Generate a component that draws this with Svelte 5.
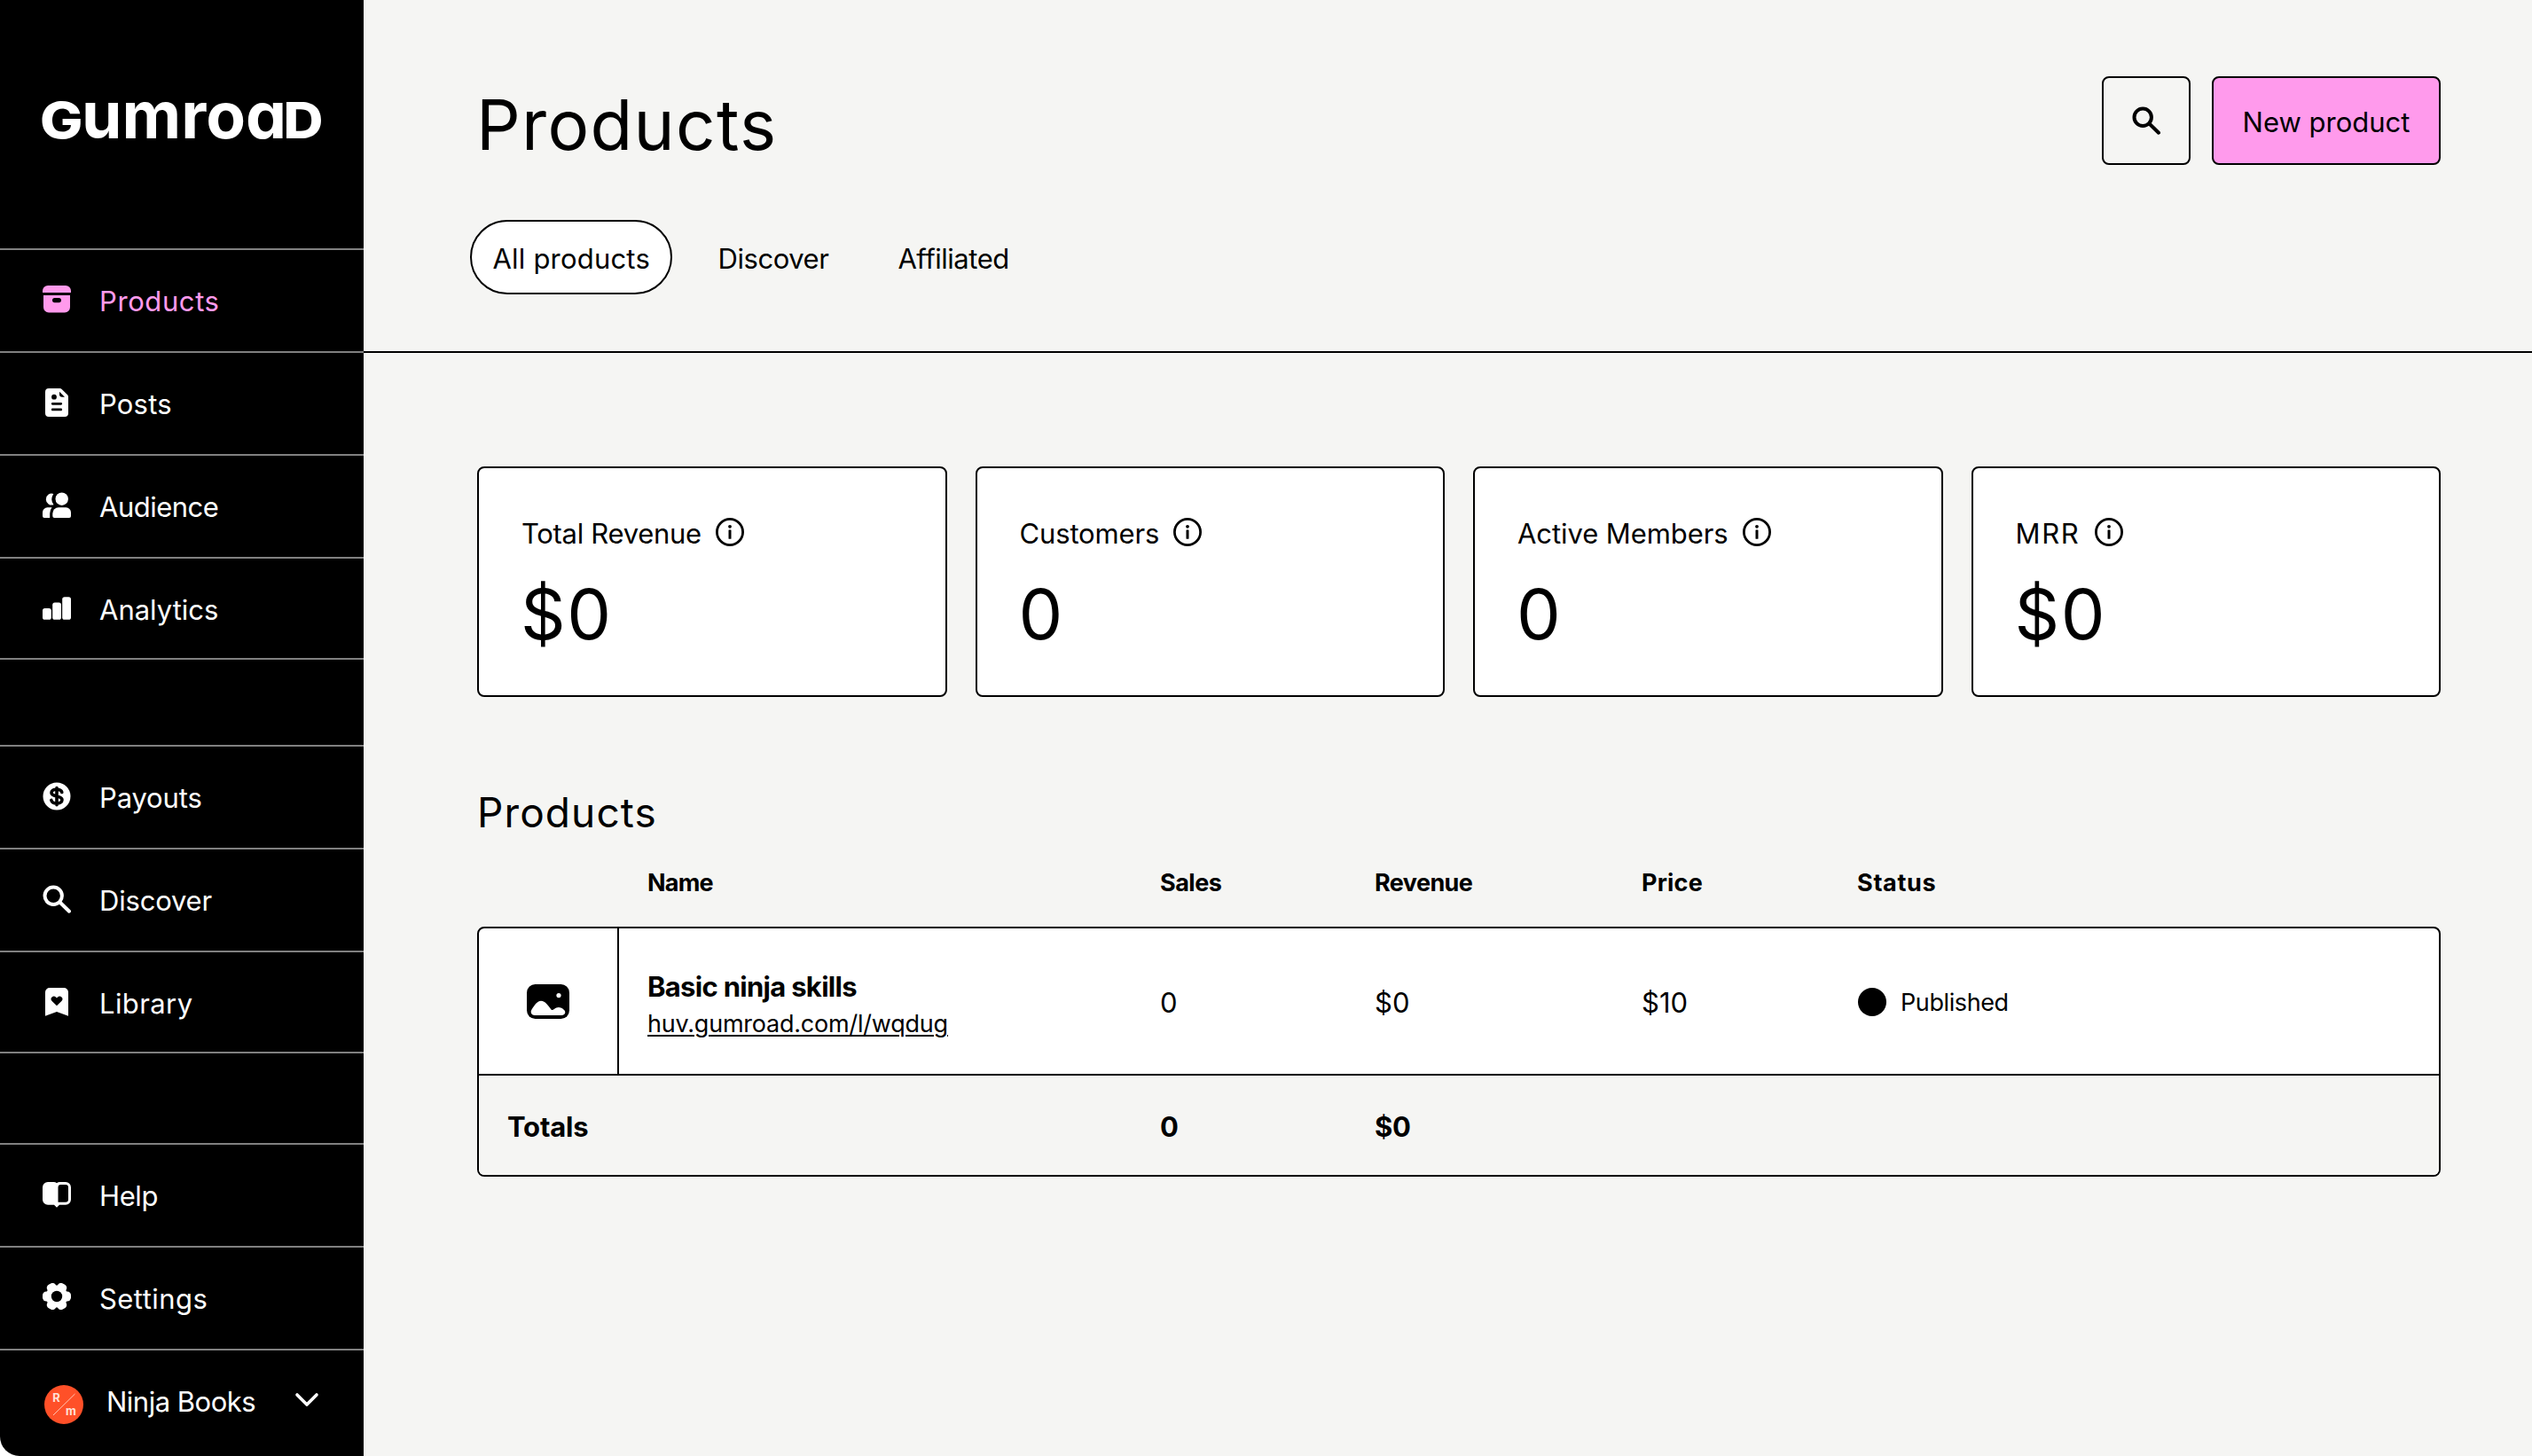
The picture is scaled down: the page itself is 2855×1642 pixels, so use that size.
<script>
  // tracking is the letter-spacing of a label, in px
  const mainLinks = [
    { label: "Products", icon: "archive", tracking: 0.6, active: true },
    { label: "Posts", icon: "file", tracking: 0.2 },
    { label: "Audience", icon: "people", tracking: -0.5 },
    { label: "Analytics", icon: "bars", tracking: 0 },
  ];

  const moreLinks = [
    { label: "Payouts", icon: "dollar", tracking: -0.15 },
    { label: "Discover", icon: "search", tracking: -0.2 },
    { label: "Library", icon: "bookmark", tracking: 0.4 },
  ];

  const footerLinks = [
    { label: "Help", icon: "book", tracking: -0.4 },
    { label: "Settings", icon: "gear", tracking: 0.45 },
  ];

  const tabs = ["All products", "Discover", "Affiliated"];
  let selected = $state("All products");

  const stats = [
    { label: "Total Revenue", value: "$0", tracking: -0.3 },
    { label: "Customers", value: "0", tracking: -0.15 },
    { label: "Active Members", value: "0", tracking: -0.08 },
    { label: "MRR", value: "$0", tracking: 1.7 },
  ];

  const columns = [
    { label: "Name", tracking: -0.8 },
    { label: "Sales", tracking: -0.5 },
    { label: "Revenue", tracking: -0.6 },
    { label: "Price", tracking: 0.2 },
    { label: "Status", tracking: 0.7 },
  ];

  const products = [
    {
      name: "Basic ninja skills",
      url: "huv.gumroad.com/l/wqdug",
      sales: "0",
      revenue: "$0",
      price: "$10",
      status: "Published",
    },
  ];
</script>

{#snippet icon(name)}
  <svg class="icon" viewBox="0 0 32 32" width="32" height="32" fill="currentColor" aria-hidden="true">
    {#if name === "archive"}
      <path d="M6 0h20a6 6 0 0 1 6 6v2H0V6a6 6 0 0 1 6-6z" />
      <path
        fill-rule="evenodd"
        d="M1 11h30v13.5a6 6 0 0 1-6 6H7a6 6 0 0 1-6-6zM13.6 14a2.6 2.6 0 0 0 0 5.2h4.8a2.6 2.6 0 0 0 0-5.2z"
      />
    {:else if name === "file"}
      <path
        fill-rule="evenodd"
        d="M7 0h12.500q1.300 0 2.200 .9l6.400 6.400q.9 .9 .9 2.200V28a4 4 0 0 1-4 4H7a4 4 0 0 1-4-4V4a4 4 0 0 1 4-4zM19 3.700v3a3 3 0 0 0 3 3h3zM13 6.800a2.900 2.900 0 1 0 0 5.800a2.900 2.900 0 1 0 0-5.800zM11.200 16a1.300 1.300 0 0 0 0 2.700h9.600a1.300 1.300 0 0 0 0-2.700zM11.200 22.600a1.300 1.300 0 0 0 0 2.700h9.600a1.300 1.300 0 0 0 0-2.700z"
      />
    {:else if name === "people"}
      <circle cx="21.700" cy="8.700" r="7.200" />
      <path d="M12.300 2.900a10.600 10.600 0 0 0 .2 12.300A6.500 6.500 0 1 1 12.300 2.900z" />
      <path d="M18 18.300h8.500a5.500 5.500 0 0 1 5.500 5.500V28q0 2-2 2H13.300q-2 0-2-2v-3a6.700 6.700 0 0 1 6.700-6.700z" />
      <path d="M5.500 18.300h5q-2.300 3-2.300 6.700v5H2q-2 0-2-2v-4.200a5.500 5.500 0 0 1 5.500-5.500z" />
    {:else if name === "bars"}
      <rect x="0" y="16" width="9.800" height="12.800" rx="2.600" />
      <rect x="11.200" y="9.600" width="9.800" height="19.200" rx="2.600" />
      <rect x="22.200" y="3.200" width="9.800" height="25.600" rx="2.600" />
    {:else if name === "dollar"}
      <circle cx="16" cy="16" r="15.500" />
      <path
        class="cut"
        d="M21.800 11.500c-.6-2.300-2.700-3.300-5.800-3.300s-6 1.200-6 3.900c0 5.400 12 2.200 12 7.900 0 2.700-2.800 4-6 4s-5.600-1.200-6.200-3.600M16 6.500v19.300"
      />
    {:else if name === "search"}
      <path class="line" d="M20 20l10 9.700" />
      <circle class="line" cx="12.200" cy="12.200" r="9.700" />
    {:else if name === "bookmark"}
      <path
        fill-rule="evenodd"
        d="M8 0h16a5 5 0 0 1 5 5v26.800L16 27 3 31.800V5a5 5 0 0 1 5-5zM16 20.200l5.400-5.200a3.100 3.100 0 0 0-4.400-4.500l-1 1-1-1a3.100 3.100 0 0 0-4.400 4.500z"
      />
    {:else if name === "book"}
      <path
        fill-rule="evenodd"
        d="M6 2h6.500q2 0 3.500 1.200Q17.500 2 19.500 2H26a6 6 0 0 1 6 6v13.700a6 6 0 0 1-6 6h-7L16 30.700 13 27.700H6a6 6 0 0 1-6-6V8a6 6 0 0 1 6-6zM20.500 5a3 3 0 0 0-3 3v16.700H26a3 3 0 0 0 3-3V8a3 3 0 0 0-3-3z"
      />
    {:else if name === "gear"}
      <mask id="gear-hole">
        <rect width="32" height="32" fill="#fff" />
        <circle cx="16" cy="15" r="6.200" fill="#000" />
      </mask>
      <g mask="url(#gear-hole)">
        <circle cx="16" cy="15" r="12.400" />
        <rect x="0" y="9.500" width="32" height="11" rx="4.200" />
        <rect x="0" y="9.500" width="32" height="11" rx="4.200" transform="rotate(60 16 15)" />
        <rect x="0" y="9.500" width="32" height="11" rx="4.200" transform="rotate(120 16 15)" />
      </g>
    {:else if name === "info"}
      <circle cx="16" cy="16" r="14.600" fill="none" stroke="currentColor" stroke-width="2.800" />
      <circle cx="16" cy="9.800" r="1.900" />
      <rect x="14.500" y="13.400" width="3" height="10.400" rx=".6" />
    {/if}
  </svg>
{/snippet}

{#snippet navLink(link)}
  <a href="#top" class="nav-link" class:active={link.active}>
    {@render icon(link.icon)}
    <span style:letter-spacing="{link.tracking}px">{link.label}</span>
  </a>
{/snippet}

<div class="app">
  <nav class="sidebar">
    <svg class="logo" viewBox="0 0 314 60" width="314" height="60" fill="#fff">
      <text class="small-cap" x="-3" y="51" textLength="48.500" lengthAdjust="spacingAndGlyphs">G</text>
      <text x="44" y="51" textLength="231" lengthAdjust="spacingAndGlyphs">umroa</text>
      <text class="small-cap" x="271.500" y="51" textLength="45" lengthAdjust="spacingAndGlyphs">D</text>
    </svg>

    <div class="nav-group">
      {#each mainLinks as link}
        {@render navLink(link)}
      {/each}
    </div>

    <div class="nav-group">
      {#each moreLinks as link}
        {@render navLink(link)}
      {/each}
    </div>

    <div class="nav-bottom">
      {#each footerLinks as link}
        {@render navLink(link)}
      {/each}
      <a href="#top" class="nav-link account">
        <svg class="avatar" viewBox="0 0 44 44" width="44" height="44">
          <circle cx="22" cy="22" r="22" fill="#ff5028" />
          <path d="M10 34L34.500 10" stroke="#ffc5b5" stroke-width="1" />
          <text x="9.300" y="19">R</text>
          <text x="24" y="34">m</text>
        </svg>
        <span>Ninja Books</span>
        <svg class="chevron" viewBox="0 0 28 18" width="28" height="18">
          <path d="M3 3l11 11L25 3" />
        </svg>
      </a>
    </div>
  </nav>

  <main>
    <header>
      <div class="title-row">
        <h1>Products</h1>
        <div class="actions">
          <button class="btn square" aria-label="Search">{@render icon("search")}</button>
          <button class="btn primary">New product</button>
        </div>
      </div>
      <div class="tabs">
        {#each tabs as tab}
          <button class="tab" class:selected={tab === selected} onclick={() => (selected = tab)}>{tab}</button>
        {/each}
      </div>
    </header>

    <section class="stats">
      {#each stats as stat}
        <div class="card">
          <div class="card-label">
            <span style:letter-spacing="{stat.tracking}px">{stat.label}</span>
            {@render icon("info")}
          </div>
          <div class="card-value">{stat.value}</div>
        </div>
      {/each}
    </section>

    <section class="products">
      <h2>Products</h2>
      <div class="row head">
        <div></div>
        {#each columns as column}
          <div style:letter-spacing="{column.tracking}px">{column.label}</div>
        {/each}
      </div>
      <div class="table">
        {#each products as product}
          <div class="row item">
            <div class="thumb">
              <svg viewBox="0 0 48 39" width="48" height="39">
                <rect width="48" height="39" rx="9.500" />
                <circle cx="36" cy="12.600" r="2.600" fill="#fff" />
                <path
                  fill="#fff"
                  d="M5.500 28.500C9 23 12 18.700 16 18.700c5 0 8.500 6 11.300 9.500 1 1.200 2 1 3.200 0 2-1.500 3.500-2.200 5.500-2.200 3 0 7.300 3 7.300 5.500 0 2-1.800 3.500-4.300 3.500H9c-3.500 0-5.500-3.500-3.500-6.500z"
                />
              </svg>
            </div>
            <div class="name">
              <strong>{product.name}</strong>
              <a href="#top">{product.url}</a>
            </div>
            <div>{product.sales}</div>
            <div>{product.revenue}</div>
            <div>{product.price}</div>
            <div class="status"><i class="dot"></i>{product.status}</div>
          </div>
        {/each}
        <div class="row totals">
          <div class="totals-label">Totals</div>
          <div>0</div>
          <div>$0</div>
        </div>
      </div>
    </section>
  </main>
</div>

<style>
  :global(body) {
    margin: 0;
    background: #fff;
  }

  .app,
  .app * {
    box-sizing: border-box;
  }

  .app {
    display: flex;
    height: 1642px;
    overflow: hidden;
    border-bottom-left-radius: 22px;
    background: #f5f5f3;
    color: #000;
    font-family: Inter, "Liberation Sans", sans-serif;
    font-size: 31px;
    line-height: 36px;
  }

  .icon {
    display: block;
    flex: none;
  }

  .line {
    fill: none;
    stroke: currentColor;
    stroke-width: 4;
    stroke-linecap: round;
  }

  .cut {
    fill: none;
    stroke: #000;
    stroke-width: 3.6;
    stroke-linecap: round;
  }

  /* sidebar */
  .sidebar {
    display: flex;
    flex-direction: column;
    flex: none;
    width: 410px;
    background: #000;
    color: #fff;
  }

  .logo {
    flex: none;
    margin: 105px 48px 115px;
    overflow: visible;
    font-size: 73px;
    font-weight: 700;
    font-feature-settings: "cv11";
  }

  .small-cap {
    font-size: 56px;
    font-weight: 800;
  }

  .nav-group {
    margin-bottom: 96px;
  }

  .nav-link {
    display: flex;
    gap: 32px;
    height: 116px;
    padding: 40px 48px 0;
    border-top: 2px solid #808080;
    color: inherit;
    text-decoration: none;
  }

  .nav-group .nav-link:last-child {
    border-bottom: 2px solid #808080;
  }

  .nav-link.active {
    color: #ff9aec;
  }

  .nav-bottom {
    margin-top: auto;
  }

  .nav-link.account {
    gap: 0;
    height: 121px;
    padding-left: 50px;
    letter-spacing: -0.5px;
  }

  .avatar {
    margin-right: 26px;
    margin-top: -1px;
  }

  .avatar text {
    fill: #ffe0d8;
    font-size: 13px;
    font-weight: 700;
  }

  .chevron {
    margin-left: auto;
    margin-right: 2px;
    margin-top: 7px;
  }

  .chevron path {
    fill: none;
    stroke: #fff;
    stroke-width: 3.6;
    stroke-linecap: round;
    stroke-linejoin: round;
  }

  /* page header */
  main {
    flex: 1;
    min-width: 0;
  }

  header {
    height: 398px;
    padding: 86px 103px 0 120px;
    border-bottom: 2px solid #000;
  }

  .title-row {
    display: flex;
    justify-content: space-between;
    height: 100px;
    padding-left: 8px;
  }

  h1 {
    margin: 5px 0 0 -1px;
    font-size: 78px;
    font-weight: 400;
    line-height: 100px;
    letter-spacing: 1.3px;
  }

  .actions {
    display: flex;
    gap: 24px;
  }

  .btn {
    display: flex;
    align-items: center;
    justify-content: center;
    height: 100px;
    padding: 4px 0 0;
    border: 2px solid #000;
    border-radius: 8px;
    background: transparent;
    color: #000;
    font: inherit;
  }

  .square {
    width: 100px;
    padding: 0 0 1px;
  }

  .primary {
    width: 258px;
    background: #ff9aec;
  }

  .tabs {
    display: flex;
    gap: 24px;
    margin-top: 62px;
  }

  .tab {
    height: 84px;
    padding: 4px 25px 0;
    border: 2px solid transparent;
    border-radius: 42px;
    background: none;
    color: #000;
    font: inherit;
    letter-spacing: -0.45px;
  }

  .tab.selected {
    padding: 4px 23.5px 0;
    border-color: #000;
    background: #fff;
    letter-spacing: 0.2px;
  }

  /* stats */
  .stats {
    display: grid;
    grid-template-columns: repeat(4, 1fr);
    gap: 32px;
    padding: 128px 103px 0 128px;
  }

  .card {
    height: 260px;
    padding: 56px 48px 0;
    border: 2px solid #000;
    border-radius: 8px;
    background: #fff;
  }

  .card-label {
    display: flex;
    gap: 16px;
  }

  .card-value {
    margin-top: 24px;
    margin-left: -1px;
    font-size: 79px;
    line-height: 96px;
    letter-spacing: 1.5px;
  }

  /* table */
  .products {
    padding: 100px 103px 0 128px;
  }

  h2 {
    margin: 0;
    font-size: 46px;
    font-weight: 400;
    line-height: 60px;
    letter-spacing: 1.1px;
  }

  .row {
    display: grid;
    grid-template-columns: 158px 578px 242px 301px 243px 1fr;
    align-items: center;
  }

  .row > div {
    padding-left: 32px;
  }

  .head {
    height: 99px;
    padding: 1px 2px 0;
    font-size: 27px;
    font-weight: 700;
  }

  .table {
    border: 2px solid #000;
    border-radius: 8px;
    background: #fff;
    overflow: hidden;
  }

  .item {
    height: 164px;
  }

  .item > div:not(.thumb) {
    padding-top: 3px;
  }

  .row > .thumb {
    display: flex;
    align-items: center;
    justify-content: center;
    align-self: stretch;
    padding: 0;
    border-right: 2px solid #000;
  }

  .item > .name:not(.thumb) {
    padding-top: 9px;
  }

  .name strong,
  .name a {
    display: block;
    width: max-content;
  }

  .name strong {
    letter-spacing: -0.7px;
  }

  .name a {
    margin-top: 6px;
    color: #000;
    font-size: 27px;
    letter-spacing: -0.22px;
    text-underline-offset: 3px;
    text-decoration-thickness: 2px;
  }

  .row > .status {
    display: flex;
    align-items: center;
    padding-left: 33px;
    font-size: 27px;
    letter-spacing: -0.4px;
  }

  .dot {
    width: 32px;
    height: 32px;
    margin-top: -2px;
    margin-right: 16px;
    border-radius: 50%;
    background: #000;
  }

  .totals {
    height: 114px;
    padding-top: 4px;
    border-top: 2px solid #000;
    background: #f5f5f3;
    font-weight: 700;
    letter-spacing: -0.2px;
  }

  .totals-label {
    grid-column: span 2;
  }
</style>
